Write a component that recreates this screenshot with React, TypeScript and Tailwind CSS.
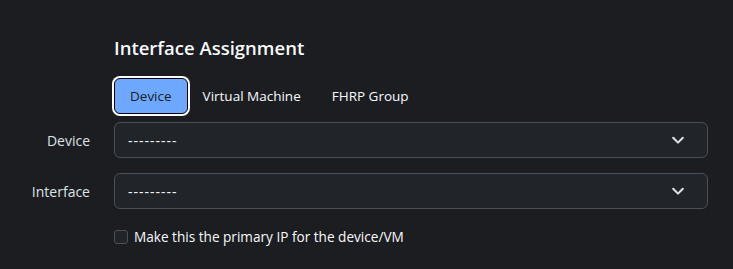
import React from 'react';

const Chevron: React.FC = () => (
  <svg width="14" height="14" viewBox="0 0 16 16" fill="none" stroke="#dee2e6" strokeWidth="2.4" strokeLinecap="round" strokeLinejoin="round">
    <path d="M2.5 5.5L8 11l5.5-5.5" />
  </svg>
);

const SelectRow: React.FC<{ label: string }> = ({ label }) => (
  <div className="flex items-center">
    <label className="w-[90px] text-right text-[14px] text-[#dee2e6]">{label}</label>
    <div className="ml-[24px] flex-1 h-[36px] rounded-[6px] border border-[#495057] bg-[#212429] flex items-center justify-between pl-[13px] pr-[22px]">
      <span className="text-[14px] text-[#f8f9fa] tracking-[1px]">---------</span>
      <Chevron />
    </div>
  </div>
);

export default function App() {
  return (
    <div className="min-h-screen w-full bg-[#1b1d21] text-[#dee2e6] font-['Open_Sans',sans-serif] pl-0 pr-[25px] pt-[35px]">
      <h2 className="ml-[114px] text-[18.5px] font-semibold leading-[26px] text-[#f8f9fa]">Interface Assignment</h2>

      <div className="ml-[114px] mt-[17px] flex items-center text-[13.5px]">
        <button className="h-[36px] px-[15px] rounded-[6px] bg-[#6ea8fe] text-[#1b1d21] border border-black ring-2 ring-white">
          Device
        </button>
        <button className="h-[36px] px-[15px] text-[#f8f9fa]">Virtual Machine</button>
        <button className="h-[36px] px-[16px] text-[#f8f9fa]">FHRP Group</button>
      </div>

      <div className="mt-[8px] flex flex-col gap-[15px]">
        <SelectRow label="Device" />
        <SelectRow label="Interface" />
      </div>

      <div className="ml-[114px] mt-[18px] flex items-center gap-[6px]">
        <span className="w-[14px] h-[14px] rounded-[3px] border border-[#495057] bg-[#212429]" />
        <span className="text-[13.6px] text-[#f8f9fa]">Make this the primary IP for the device/VM</span>
      </div>
    </div>
  );
}
